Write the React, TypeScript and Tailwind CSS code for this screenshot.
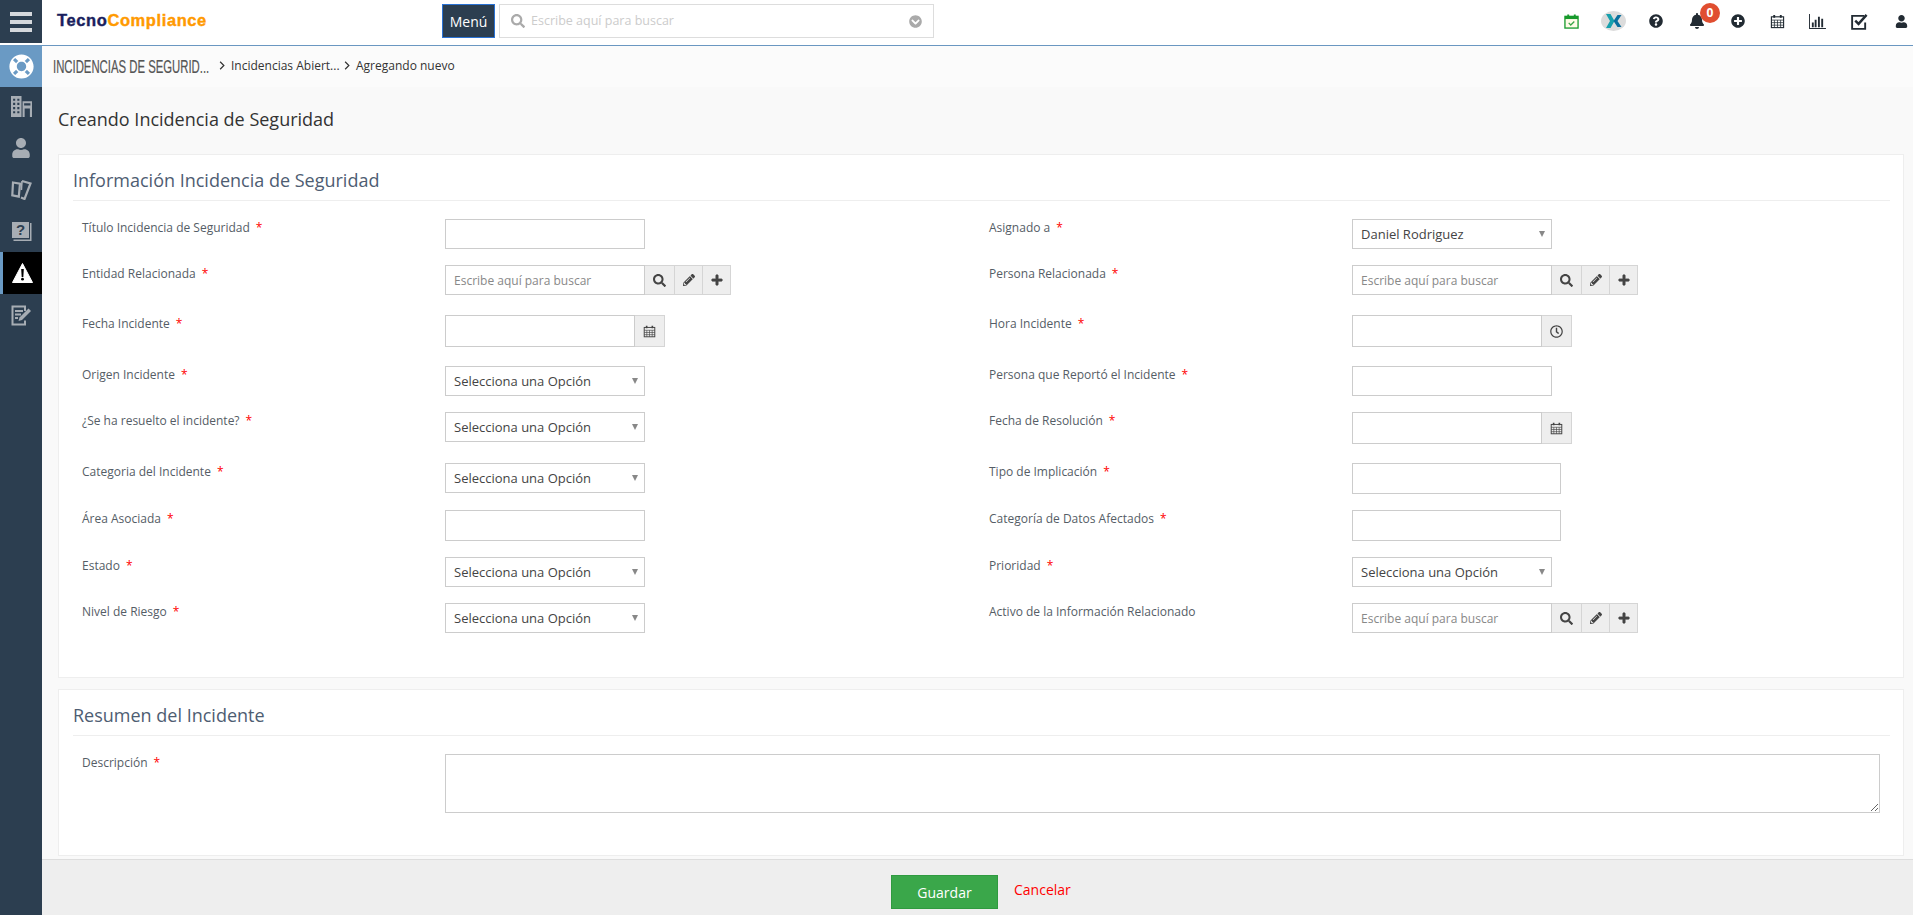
import React from "react";
import {
  FaBell,
  FaChevronCircleDown,
  FaLifeRing,
  FaPencilAlt,
  FaPlus,
  FaPlusCircle,
  FaQuestionCircle,
  FaRegClock,
  FaSearch,
  FaUser,
} from "react-icons/fa";

const Calendar = ({ className = "" }: { className?: string }) => (
  <svg viewBox="0 0 16 16" className={className} fill="none" stroke="currentColor">
    <rect x="1.5" y="3" width="13" height="11.5" strokeWidth="1.2" />
    <path d="M1.5 6.5h13M1.5 9.2h13M1.5 11.9h13M4.7 6.5v8M8 6.5v8M11.3 6.5v8" strokeWidth="0.8" />
    <path d="M4.5 1v3M11.5 1v3" strokeWidth="2" />
  </svg>
);

const Building = () => (
  <svg viewBox="0 0 20 20" className="w-[21px] h-[21px]" fill="currentColor">
    <path
      fillRule="evenodd"
      d="M0 0h10v20H0zM2 2.5v2h2v-2zM6 2.5v2h2v-2zM2 6.5v2h2v-2zM6 6.5v2h2v-2zM2 10.5v2h2v-2zM6 10.5v2h2v-2zM2 14.5v2h2v-2zM6 14.5v2h2v-2z"
    />
    <path fillRule="evenodd" d="M11 5h9v15h-2v-8h-5v8h-2zM12.5 7v2h6V7z" />
  </svg>
);

const Books = () => (
  <svg viewBox="0 0 21 21" className="w-[21px] h-[21px]" fill="none" stroke="currentColor" strokeWidth="2.2">
    <path d="M2 3.5l7 1.2-1.2 13-6.5-1.4z" />
    <path d="M11 2l8.5 2.5-6 15.5-3.5-1.5" />
    <path d="M11 2l-.6 9" strokeWidth="1.6" />
  </svg>
);

const QuestionBook = () => (
  <svg viewBox="0 0 21 21" className="w-[21px] h-[21px]">
    <path d="M1 1h17v16H1z" fill="currentColor" />
    <path d="M19 2h1.5v18H2.5v-1.5H19z" fill="currentColor" />
    <text x="9.5" y="14" textAnchor="middle" fontSize="15" fontWeight="700" fill="#2c3e50" fontFamily="Liberation Sans, sans-serif">
      ?
    </text>
  </svg>
);

const EditNote = () => (
  <svg viewBox="0 0 21 21" className="w-[21px] h-[21px]" fill="none" stroke="currentColor">
    <path d="M14 6V1.5H1.5v18H14v-4" strokeWidth="2" />
    <path d="M4 6h8M4 9.5h6M4 13h3" strokeWidth="1.8" />
    <path d="M7.5 16l1-3.5 9-9 2.5 2.5-9 9z" fill="currentColor" stroke="none" />
  </svg>
);

const Warning = () => (
  <svg viewBox="0 0 21 20" className="w-[21px] h-[20px]">
    <path d="M10.5 0.5L20.5 19.5H0.5z" fill="#fff" stroke="#fff" strokeLinejoin="round" />
    <path d="M9.2 6h2.6l-.5 8H9.7z" fill="#000" />
    <circle cx="10.5" cy="16.2" r="1.4" fill="#000" />
  </svg>
);

const Chart = () => (
  <svg viewBox="0 0 18 16" className="w-[17px] h-[15px]" fill="currentColor">
    <path d="M0 0h1v14.8h17V16H0z" />
    <path d="M3 9h2v5H3zM6 6h2v8H6zM9.5 3h2v11h-2zM13 5h2v9h-2z" />
  </svg>
);

const CheckBox = () => (
  <svg viewBox="0 0 18 18" className="w-[17px] h-[17px]" fill="none" stroke="currentColor">
    <path d="M14 3H1.2v13.8H15V10" strokeWidth="2" />
    <path d="M4.5 8l3.5 3.5L16.5 2" strokeWidth="2.6" />
  </svg>
);

const GreenCalendar = () => (
  <svg viewBox="0 0 16 16" className="w-[15px] h-[15px]" fill="none">
    <rect x="1" y="2.5" width="14" height="12.5" stroke="#179a2c" strokeWidth="1.4" fill="#fffbe8" />
    <path d="M1 3h14v2.4H1z" fill="#179a2c" />
    <path d="M4.5 .5v3M11.5 .5v3" stroke="#179a2c" strokeWidth="2" />
    <path d="M5 9.5l2.2 2.2L11 8" stroke="#3aa74a" strokeWidth="1.4" />
  </svg>
);

const XLogo = () => (
  <svg viewBox="0 0 25 20" className="w-[25px] h-[20px]">
    <ellipse cx="12.5" cy="10" rx="12.5" ry="10" fill="#dcdcdc" />
    <path d="M5 3h4.5l4 7-4 7H5l4-7z" fill="#17a0ad" />
    <path d="M20.5 4h-4L12.5 10l4 6h4l-4-6z" fill="#0a6f9e" />
  </svg>
);

const HeaderIcon = ({ x, children }: { x: string; children: React.ReactNode }) => (
  <div className={`flex items-center justify-center ${x}`}>{children}</div>
);

const Label = ({ text, required = true }: { text: string; required?: boolean }) => (
  <label className="w-[372px] pl-[9px] shrink-0 text-[12px] leading-[18px] text-[#555d66]">
    {text}
    {required && <span className="ml-[6px] text-[#f00]">*</span>}
  </label>
);

const TextInput = ({ w = "w-[200px]", h = "h-[30px]" }: { w?: string; h?: string }) => (
  <input className={`${w} ${h} border border-[#ccc] bg-white outline-none`} />
);

const Select = ({ value = "Selecciona una Opción", pl = "pl-[8px]", h = "h-[30px]" }: { value?: string; pl?: string; h?: string }) => (
  <div className={`w-[200px] ${h} ${pl} pr-[6px] pt-[2px] border border-[#ccc] bg-white flex items-center justify-between text-[13px] text-[#444]`}>
    <span>{value}</span>
    <span className="-mt-[3px] w-0 h-0 border-x-[3px] border-x-transparent border-t-[6px] border-t-[#888]" />
  </div>
);

const Addon = ({ w, children }: { w: string; children: React.ReactNode }) => (
  <span className={`${w} h-full flex items-center justify-center bg-[#eee] border border-l-0 border-[#d5d5d5] text-[#444]`}>
    {children}
  </span>
);

const Lookup = () => (
  <div className="flex h-[30px]">
    <input
      placeholder="Escribe aquí para buscar"
      className="w-[200px] h-full px-[8px] border border-[#ccc] bg-white text-[12px] outline-none placeholder:text-[#888]"
    />
    <Addon w="w-[30px]">
      <FaSearch className="text-[13px]" />
    </Addon>
    <Addon w="w-[28px]">
      <FaPencilAlt className="text-[12px]" />
    </Addon>
    <Addon w="w-[28px]">
      <FaPlus className="text-[12px]" stroke="currentColor" strokeWidth={30} />
    </Addon>
  </div>
);

const DateField = ({ clock = false }: { clock?: boolean }) => (
  <div className="flex h-[32px]">
    <input className="w-[190px] h-full border border-[#ccc] bg-white outline-none" />
    <Addon w="w-[30px]">
      {clock ? <FaRegClock className="text-[13px]" /> : <Calendar className="w-[13px] h-[13px]" />}
    </Addon>
  </div>
);

const rows: { h: string; left: [string, React.ReactNode, boolean?]; right: [string, React.ReactNode, boolean?] }[] = [
  {
    h: "h-[46px]",
    left: ["Título Incidencia de Seguridad", <TextInput />],
    right: ["Asignado a", <Select value="Daniel Rodriguez" />],
  },
  {
    h: "h-[50px]",
    left: ["Entidad Relacionada", <Lookup />],
    right: ["Persona Relacionada", <Lookup />],
  },
  {
    h: "h-[51px]",
    left: ["Fecha Incidente", <DateField />],
    right: ["Hora Incidente", <DateField clock />],
  },
  {
    h: "h-[46px]",
    left: ["Origen Incidente", <Select />],
    right: ["Persona que Reportó el Incidente", <TextInput />],
  },
  {
    h: "h-[51px]",
    left: ["¿Se ha resuelto el incidente?", <Select />],
    right: ["Fecha de Resolución", <DateField />],
  },
  {
    h: "h-[47px]",
    left: ["Categoria del Incidente", <Select />],
    right: ["Tipo de Implicación", <TextInput w="w-[209px]" h="h-[31px]" />],
  },
  {
    h: "h-[47px]",
    left: ["Área Asociada", <TextInput h="h-[31px]" />],
    right: ["Categoría de Datos Afectados", <TextInput w="w-[209px]" h="h-[31px]" />],
  },
  {
    h: "h-[46px]",
    left: ["Estado", <Select />],
    right: ["Prioridad", <Select />],
  },
  {
    h: "h-[30px]",
    left: ["Nivel de Riesgo", <Select />],
    right: ["Activo de la Información Relacionado", <Lookup />, false],
  },
];

const Heading = ({ children }: { children: React.ReactNode }) => (
  <h2 className="pb-[8px] border-b border-[#eee] text-[18px] leading-[24px] text-[#4e5d72]">{children}</h2>
);

const sideItems = [
  { icon: <Building />, h: "h-[41px] pb-[3px]" },
  { icon: <FaUser className="text-[20px]" />, h: "h-[41px] pb-[2px]" },
  { icon: <Books />, h: "h-[41px]" },
  { icon: <QuestionBook />, h: "h-[42px]" },
];

export default function App() {
  return (
    <div className="h-screen overflow-hidden bg-white font-['Open_Sans',sans-serif] flex flex-col">
      {/* Top bar */}
      <header className="h-[46px] shrink-0 flex border-b border-[#6a97c1] bg-white">
        <div className="w-[42px] h-[43px] bg-[#2c3e50] flex flex-col justify-center gap-[4px] px-[10px]">
          <span className="h-[4px] bg-[#d5d8dc]" />
          <span className="h-[4px] bg-[#d5d8dc]" />
          <span className="h-[4px] bg-[#d5d8dc]" />
        </div>
        <div className="w-[400px] pl-[15px] pt-[10px] font-['Liberation_Sans',sans-serif] font-bold text-[16.5px] leading-[20px] tracking-[0.6px] [-webkit-text-stroke:0.4px]">
          <span className="text-[#1a1f5e]">Tecno</span>
          <span className="text-[#ff9a00]">Compliance</span>
        </div>
        <button className="mt-[4px] w-[53px] h-[34px] bg-[#2c3e50] border border-[#2a72d4] text-white text-[14px]">
          Menú
        </button>
        <div className="ml-[4px] mt-[4px] w-[435px] h-[34px] border border-[#ddd] flex items-center pl-[11px] pr-[11px]">
          <FaSearch className="text-[14px] text-[#aaa]" />
          <span className="ml-[6px] flex-1 text-[12.5px] text-[#ccc]">Escribe aquí para buscar</span>
          <FaChevronCircleDown className="text-[13px] text-[#aaa]" />
        </div>
        <div className="ml-auto flex items-center h-[42px] text-[#222b33] relative">
          <HeaderIcon x="w-[42px]">
            <GreenCalendar />
          </HeaderIcon>
          <HeaderIcon x="w-[42px]">
            <XLogo />
          </HeaderIcon>
          <HeaderIcon x="w-[43px]">
            <FaQuestionCircle className="text-[14px]" />
          </HeaderIcon>
          <HeaderIcon x="w-[40px] relative">
            <FaBell className="text-[16px]" />
            <span className="absolute -top-[10px] left-[23px] w-[20px] h-[20px] rounded-full bg-[#e04e30] text-white text-[12px] font-bold flex items-center justify-center">
              0
            </span>
          </HeaderIcon>
          <HeaderIcon x="w-[41px]">
            <FaPlusCircle className="text-[14px]" />
          </HeaderIcon>
          <HeaderIcon x="w-[39px]">
            <Calendar className="w-[15px] h-[15px]" />
          </HeaderIcon>
          <HeaderIcon x="w-[41px]">
            <Chart />
          </HeaderIcon>
          <HeaderIcon x="w-[43px]">
            <CheckBox />
          </HeaderIcon>
          <HeaderIcon x="w-[32px] pl-[8px]">
            <FaUser className="text-[13px]" />
          </HeaderIcon>
        </div>
      </header>

      <div className="flex flex-1 min-h-0">
        {/* Side nav */}
        <nav className="w-[42px] shrink-0 bg-[#2c3e50] text-[#a7adb4]">
          <div className="h-[41px] pb-[1px] bg-[#6a9ac4] flex items-center justify-center text-white">
            <FaLifeRing className="text-[25px]" />
          </div>
          {sideItems.map((item, i) => (
            <div key={i} className={`${item.h} flex items-center justify-center`}>
              {item.icon}
            </div>
          ))}
          <div className="h-[42px] bg-black border-l-[3px] border-[#6a9ac4] flex items-center justify-center text-white">
            <Warning />
          </div>
          <div className="h-[42px] flex items-center justify-center">
            <EditNote />
          </div>
        </nav>

        {/* Main */}
        <main className="flex-1 min-w-0 flex flex-col bg-[#f9f9f9]">
          <div className="h-[41px] shrink-0 pb-[2px] bg-[#fbfbfb] flex items-center pl-[11px] text-[12px] text-[#333]">
            <div className="w-[155px] h-[24px] mt-[2px] overflow-visible">
              <span className="block origin-left scale-x-[0.63] whitespace-nowrap font-['Liberation_Sans',sans-serif] text-[18px] leading-[24px] text-[#555] [-webkit-text-stroke:0.2px]">
                INCIDENCIAS DE SEGURID...
              </span>
            </div>
            <span className="ml-[11px] mr-[6px] text-[#333]">
              <svg viewBox="0 0 8 12" className="w-[6px] h-[9px]" fill="none" stroke="currentColor" strokeWidth="1.6">
                <path d="M1.5 1l5 5-5 5" />
              </svg>
            </span>
            <span className="w-[108px] whitespace-nowrap">Incidencias Abiert...</span>
            <span className="ml-[5px] mr-[6px]">
              <svg viewBox="0 0 8 12" className="w-[6px] h-[9px]" fill="none" stroke="currentColor" strokeWidth="1.6">
                <path d="M1.5 1l5 5-5 5" />
              </svg>
            </span>
            <span>Agregando nuevo</span>
          </div>

          <h1 className="pl-[16px] pt-[20px] pb-[23px] text-[18px] leading-[24px] text-[#333]">
            Creando Incidencia de Seguridad
          </h1>

          <section className="ml-[16px] mr-[9px] bg-white border border-[#eee] pl-[14px] pr-[13px] pt-[13px] pb-[44px]">
            <Heading>Información Incidencia de Seguridad</Heading>
            <div className="mt-[18px]">
              {rows.map((row) => (
                <div key={row.left[0]} className={`${row.h} flex`}>
                  <div className="w-[907px] flex items-start">
                    <Label text={row.left[0]} />
                    {row.left[1]}
                  </div>
                  <div className="flex items-start">
                    <Label text={row.right[0]} required={row.right[2] !== false} />
                    {row.right[1]}
                  </div>
                </div>
              ))}
            </div>
          </section>

          <section className="mt-[11px] ml-[16px] mr-[9px] bg-white border border-[#eee] pl-[14px] pr-[13px] pt-[13px] pb-[42px]">
            <Heading>Resumen del Incidente</Heading>
            <div className="mt-[18px] flex items-start">
              <Label text="Descripción" />
              <textarea className="w-[1435px] h-[59px] block border border-[#ccc] outline-none resize" />
            </div>
          </section>

          <footer className="mt-auto h-[56px] shrink-0 bg-[#eee] border-t border-[#ddd] flex items-start pl-[849px] pt-[15px]">
            <button className="w-[107px] h-[34px] bg-[#3aa74a] border border-[#2f9a40] text-white text-[14px]">
              Guardar
            </button>
            <a className="ml-[16px] mt-[5px] text-[14px] leading-[20px] text-[#f00]">Cancelar</a>
          </footer>
        </main>
      </div>
    </div>
  );
}
